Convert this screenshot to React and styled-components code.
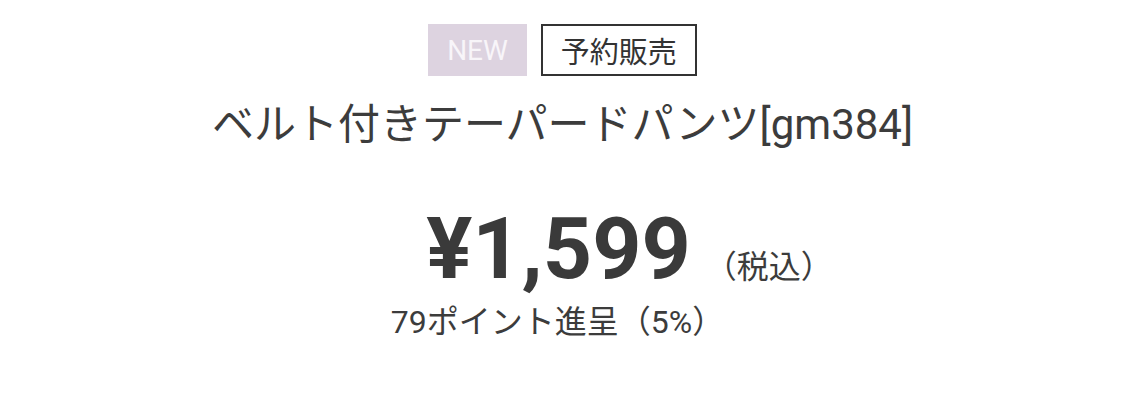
import React from "react";
import styled, { createGlobalStyle } from "styled-components";

const Global = createGlobalStyle`
  html, body { margin: 0; padding: 0; background: #fff; }
  body { font-family: Roboto, "Noto Sans CJK JP", sans-serif; color: #3a3a3a; }
`;

const Page = styled.div`
  width: 1125px;
  height: 403px;
  display: flex;
  flex-direction: column;
  align-items: center;
  padding-top: 24px;
  box-sizing: border-box;
`;

const Badges = styled.div`
  display: flex;
  gap: 14px;
`;

const Badge = styled.div`
  height: 52px;
  box-sizing: border-box;
  display: flex;
  align-items: center;
  justify-content: center;
  font-size: ${(p) => p.$size}px;
  padding: 0 ${(p) => p.$pad}px;
  background: ${(p) => (p.$filled ? "#ddd3e0" : "#fff")};
  color: ${(p) => (p.$filled ? "#f8f5f9" : "#333")};
  border: ${(p) => (p.$filled ? "none" : "2.5px solid #333")};
`;

const Title = styled.h1`
  margin: 23px 0 0;
  font-weight: 400;
  font-size: 42px;
  line-height: 52px;
  color: #3c3c3c;
  letter-spacing: 0;
`;

const PriceRow = styled.div`
  margin-top: 55px;
  margin-left: 134px;
  display: flex;
  align-items: baseline;
  gap: 14px;
`;

const Price = styled.span`
  font-size: 86px;
  font-weight: 700;
  line-height: 86px;
  color: #3a3a3a;
`;

const Tax = styled.span`
  font-size: 32px;
  color: #3c3c3c;
`;

const Points = styled.div`
  margin-top: 10px;
  margin-right: 10px;
  font-size: 32px;
  line-height: 40px;
  color: #3c3c3c;
`;

export default function App() {
  return (
    <>
      <Global />
      <Page>
        <Badges>
          <Badge $filled $size={28} $pad={19}>NEW</Badge>
          <Badge $size={29} $pad={18}>予約販売</Badge>
        </Badges>
        <Title>ベルト付きテーパードパンツ[gm384]</Title>
        <PriceRow>
          <Price>¥1,599</Price>
          <Tax>（税込）</Tax>
        </PriceRow>
        <Points>79ポイント進呈（5%）</Points>
      </Page>
    </>
  );
}
